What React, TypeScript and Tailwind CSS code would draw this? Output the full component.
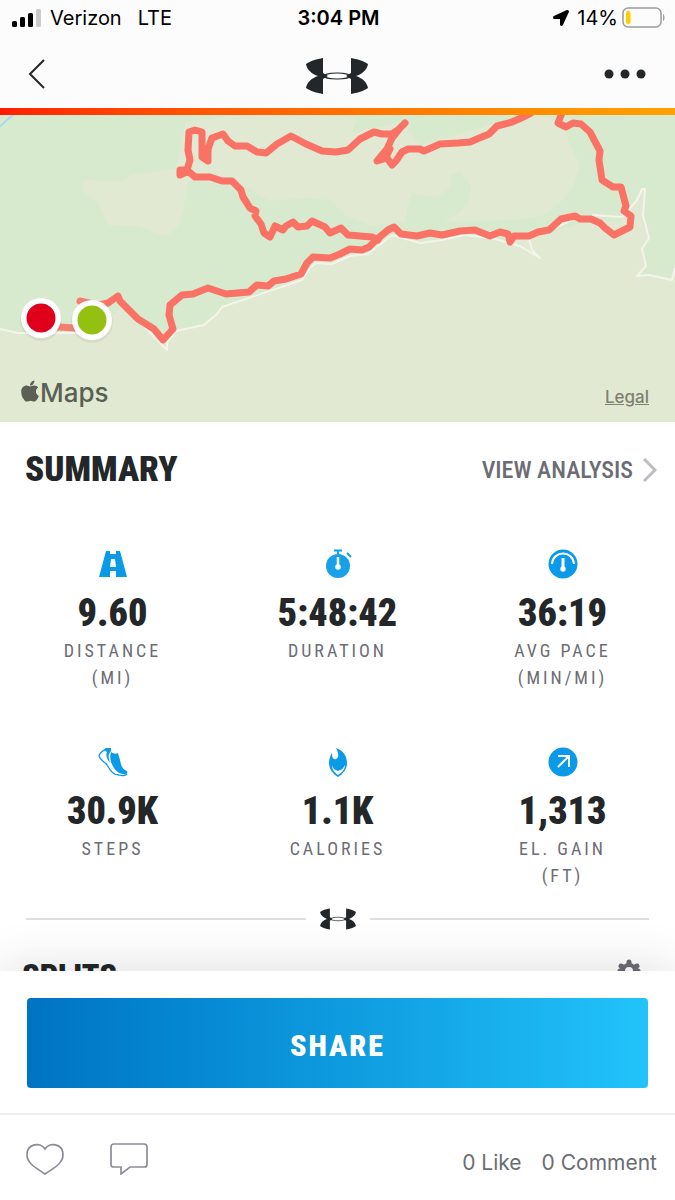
import type { ReactNode } from "react";
import { FaApple, FaLocationArrow } from "react-icons/fa";

const condensed = "font-['Roboto_Condensed','Liberation_Sans_Narrow','Open_Sans',sans-serif]";

const route =
  "M531 113 L519 119 L512 122 L497 126 L489 134 L470 142 L458 143 L440 144 L424 151 L420 149 L408 149 L402 152 L396 161 L392 165 L387 158 L377 161 L387 149 L392 138 L400 128 L405 123 L398 130 L392 134 L382 134 L374 132 L360 139 L348 150 L336 152 L322 151 L306 144 L291 136 L277 144 L266 153 L257 152 L247 146 L235 146 L228 141 L223 134 L212 138 L208 149 L208 161 L202 157 L202 132 L195 130 L189 132 L188 150 L190 160 L187 170 L180 170 L180 175 L188 171 L195 177 L210 177 L222 181 L232 181 L241 190 L243 197 L250 208 L256 211 L255 216 L261 224 L264 233 L270 237 L275 226 L283 230 L286 226 L293 222 L298 227 L307 226 L312 221 L325 227 L330 233 L341 228 L348 235 L372 237 L378 240";

const routeEast =
  "M562 113 L558 123 L566 127 L573 123 L581 124 L590 132 L600 151 L599 160 L602 180 L613 187 L621 187 L626 206 L624 211 L631 216 L630 227 L614 235 L605 228 L600 223 L591 219 L580 219 L575 216 L561 219 L549 230 L538 232 L529 236 L514 236 L510 242 L508 234 L500 232 L490 236 L475 230 L460 231 L442 235 L430 233 L417 236 L401 234 L394 227 L388 230 L376 240 L369 247 L362 250 L350 249 L340 254 L330 258 L313 257 L307 263 L301 274 L286 279 L274 281 L268 286 L257 285 L249 292 L226 294 L208 288 L193 294 L182 295 L170 305 L169 315 L173 329 L163 340 L154 329 L138 319 L120 301 L118 296 L108 303";

function RouteMap() {
  return (
    <svg
      className="block h-full w-full"
      viewBox="0 115 675 307"
      preserveAspectRatio="xMidYMid slice"
      role="img"
      aria-label="Workout route"
    >
      <rect y="115" width="675" height="307" fill="#e1e9d2" />
      <path
        d="M0 115 H675 V270 L672 280 L647 275 L638 277 L647 265 L643 250 L649 238 L643 215 L645 190 L641 188 L636 202 L620 222 L590 220 L560 230 L520 240 L460 238 L420 243 L393 235 L368 255 L350 256 L335 263 L315 265 L302 281 L222 308 L205 325 L175 331 L167 350 L120 308 L92 334 H18 L0 329 Z"
        fill="#d8eacd"
      />
      <path
        d="M186 122 L240 115 H330 L357 119 L352 133 L400 122 L420 145 L500 122 L540 115 L562 122 L570 145 L580 165 L574 185 L562 200 L545 215 L525 219 L485 221 L440 222 L400 222 L370 226 L345 215 L330 200 L308 198 L270 201 L245 186 L188 180 L184 207 L178 228 L166 236 L137 226 L108 225 L98 203 L82 190 L84 180 L122 182 L132 175 L176 169 Z"
        fill="#e1e9d2"
      />
      <path
        d="M405 223 L407 208 L412 193 L436 197 L450 188 L452 174 L460 171 L471 186 L470 200 L460 212 L440 224 Z"
        fill="#d8eacd"
      />
      <path d="M-2 128 L14 114" stroke="#a9d8ee" strokeWidth="2" />
      <path
        d="M0 329 L18 333 H84 M120 302 L167 350 V343 L176 331 L204 325 L217 314 L222 307 L302 280 L310 268 L316 263 L332 264 L350 256 L368 254 L392 235 L420 243 L442 240 L465 235 L495 239 L520 246 L540 258 L532 250 L529 238 M550 230 L572 220 M592 215 L622 217 L637 200 L642 189 H645 L643 215 L649 238 L642 249 L646 266 L637 276 L649 275 L672 280 L675 268"
        fill="none"
        stroke="#f4f4ec"
        strokeWidth="2"
        strokeLinejoin="round"
      />
      <g fill="none" stroke="#fa7265" strokeWidth="7" strokeLinejoin="round" strokeLinecap="round">
        <path d={route} />
        <path d={routeEast} />
        <path d="M108 303 L98 305 L80 301 M58 327 L76 328" opacity="0.9" />
        <path d="M386 157 L390 149" />
      </g>
      <circle cx="41" cy="320" r="21" fill="#000" opacity="0.05" />
      <circle cx="41" cy="318" r="20" fill="#fff" />
      <circle cx="41" cy="318" r="14.5" fill="#e0001c" />
      <circle cx="92" cy="322" r="21" fill="#000" opacity="0.05" />
      <circle cx="92" cy="320" r="20" fill="#fff" />
      <circle cx="92" cy="320" r="14.5" fill="#94c011" />
    </svg>
  );
}

function Logo({ className }: { className: string }) {
  return (
    <svg className={className} viewBox="0 0 64 38" fill="#23272a">
      <path d="M18 1 C12 2 5 4 1 7 C2 13 7 17 13 19 C7 21 2 25 1 31 C5 34 12 36 18 37 V22 L23 19 L18 16 Z" />
      <path d="M46 1 C52 2 59 4 63 7 C62 13 57 17 51 19 C57 21 62 25 63 31 C59 34 52 36 46 37 V22 L41 19 L46 16 Z" />
      <ellipse cx="32" cy="19" rx="13" ry="3" fill="none" stroke="#23272a" strokeWidth="1.2" />
    </svg>
  );
}

function RoadIcon() {
  return (
    <svg width="30" height="30" viewBox="0 0 30 30" fill="#0b9ae8">
      <path d="M8 2 H12 V5 H18 V2 H22 L29 28 H18 V22 H12 V28 H1 Z M13 10 L12 18 H18 L17 10 Z" fillRule="evenodd" />
    </svg>
  );
}

function StopwatchIcon() {
  return (
    <svg width="30" height="30" viewBox="0 0 30 30">
      <circle cx="15" cy="17" r="12" fill="#17a1e8" />
      <path d="M11 1.5 H19 M15 2 V6 M24 4 L28 8" stroke="#17a1e8" strokeWidth="2" fill="none" />
      <path d="M15 8 V18" stroke="#fff" strokeWidth="2.5" />
      <circle cx="15" cy="18" r="2.8" fill="#fff" />
    </svg>
  );
}

function PaceIcon() {
  return (
    <svg width="30" height="30" viewBox="0 0 30 30">
      <circle cx="15" cy="15" r="14.5" fill="#0b9ae8" />
      <path d="M4 15 C5 1 25 1 26 15" stroke="#fff" strokeWidth="2" fill="none" />
      <path d="M15 9 V20" stroke="#fff" strokeWidth="3" />
      <circle cx="15" cy="20" r="2.7" fill="#fff" />
    </svg>
  );
}

function ShoeIcon() {
  return (
    <svg width="30" height="30" viewBox="0 0 30 30">
      <path d="M6 3 L8 1 L13 1 L13 4 L11 7 C10 9 11 13 12 16 C10 14 7 8 9 5 Z" fill="#0b9ae8" />
      <path
        d="M13 5 C16 7 18 7 20 6 L22 13 C23 18 24 22 29 24 C30 27 28 28 25 27 C18 26 15 20 13 15 C12 11 12 8 13 5 Z"
        fill="#0b9ae8"
      />
      <path
        d="M8 2 C5 4 1 6 1 9 C2 13 6 14 9 18 C12 23 15 28 21 28 C24 29 28 29 29 27"
        fill="none"
        stroke="#0b9ae8"
        strokeWidth="1.3"
      />
    </svg>
  );
}

function FlameIcon() {
  return (
    <svg width="30" height="30" viewBox="0 0 30 30">
      <path
        d="M13 1 C20 3 24 9 24 16 C24 22 20 27 15 30 C10 27 6 22 6 16 C6 12 7 9 9 6 C9 10 10 13 13 12 C17 10 15 5 13 1 Z"
        fill="#0b9ae8"
      />
      <path d="M9 18 C10 22 12 23 15 24 C18 23 20 22 22 18 C22 23 18 26 15 28 C12 26 9 23 9 18 Z" fill="#fff" />
    </svg>
  );
}

function GainIcon() {
  return (
    <svg width="30" height="30" viewBox="0 0 30 30">
      <circle cx="15" cy="15" r="14.5" fill="#0b9ae8" />
      <path d="M10 9 H21 V20 M21 9 L10 20" stroke="#fff" strokeWidth="2" fill="none" />
    </svg>
  );
}

function GearIcon() {
  return (
    <svg width="24" height="24" viewBox="0 0 24 24" fill="none" stroke="#6c6d74">
      <circle cx="12" cy="12" r="6" strokeWidth="4" />
      <path
        d="M12 3 V5 M12 19 V21 M3 12 H5 M19 12 H21 M4 7 L6 8 M18 16 L20 17 M4 17 L6 16 M18 8 L20 7"
        strokeWidth="5"
        strokeLinecap="round"
      />
    </svg>
  );
}

type Stat = { icon: ReactNode; value: string; label: string; unit?: string };

const stats: Stat[] = [
  { icon: <RoadIcon />, value: "9.60", label: "DISTANCE", unit: "(MI)" },
  { icon: <StopwatchIcon />, value: "5:48:42", label: "DURATION" },
  { icon: <PaceIcon />, value: "36:19", label: "AVG PACE", unit: "(MIN/MI)" },
  { icon: <ShoeIcon />, value: "30.9K", label: "STEPS" },
  { icon: <FlameIcon />, value: "1.1K", label: "CALORIES" },
  { icon: <GainIcon />, value: "1,313", label: "EL. GAIN", unit: "(FT)" },
];

function StatusBar() {
  return (
    <div className="grid h-9 grid-cols-3 items-center pr-[10px] pl-3 text-xl text-black">
      <div className="flex items-center gap-2">
        <svg width="30" height="20" viewBox="0 0 30 20">
          <rect x="0" y="13" width="5" height="6" rx="1.5" />
          <rect x="8" y="9" width="5" height="10" rx="1.5" />
          <rect x="16" y="5" width="5" height="14" rx="1.5" />
          <rect x="24" y="1" width="5" height="18" rx="1.5" fill="#cbcbcb" />
        </svg>
        <span>Verizon</span>
        <span className="ml-2">LTE</span>
      </div>
      <div className="text-center text-xl font-semibold">3:04 PM</div>
      <div className="flex items-center justify-end gap-1">
        <FaLocationArrow size={16} className="mr-1" />
        <span>14%</span>
        <svg width="43" height="22" viewBox="0 0 43 22">
          <rect x="1" y="1" width="38" height="19" rx="5" fill="none" stroke="#9b9b9b" strokeWidth="1.5" />
          <rect x="4" y="4" width="4.5" height="13" rx="2" fill="#fc0" />
          <path d="M41 7 C43 8 43 13 41 14 Z" fill="#9b9b9b" />
        </svg>
      </div>
    </div>
  );
}

export default function App() {
  return (
    <div className="flex h-screen flex-col overflow-hidden bg-white font-['Inter','Liberation_Sans',sans-serif] text-[#23272a]">
      {/* Header */}
      <header className="shrink-0 bg-[#fcfcfc]">
        <StatusBar />
        <nav className="grid h-18 grid-cols-3 items-center px-7 pt-1">
          <button aria-label="Back" className="justify-self-start">
            <svg width="18" height="32" viewBox="0 0 18 32" fill="none" stroke="#23272a" strokeWidth="2">
              <path d="M16 2 L2 16 L16 30" />
            </svg>
          </button>
          <Logo className="mt-1 h-[38px] w-16 justify-self-center" />
          <button aria-label="More" className="justify-self-end">
            <svg width="43" height="10" viewBox="0 0 43 10" fill="#23272a">
              <circle cx="5" cy="5" r="4.5" />
              <circle cx="21" cy="5" r="4.5" />
              <circle cx="37" cy="5" r="4.5" />
            </svg>
          </button>
        </nav>
        <div className="h-[7px] bg-linear-to-r from-[#ff1a00] to-[#ffa200]" />
      </header>

      <main className="min-h-0 flex-1 overflow-hidden">
        {/* Map */}
        <section className="relative h-[307px]">
          <RouteMap />
          <div className="absolute bottom-[10px] left-[18px] flex items-center text-[26px] font-medium text-[#5b5f54]">
            <FaApple size={24} className="mb-1 -mr-0.5" />
            <span>Maps</span>
          </div>
          <a href="#legal" className="absolute right-[26px] bottom-3 text-[17px] font-medium text-[#7c8073] underline">
            Legal
          </a>
        </section>

        {/* Summary */}
        <section className={condensed}>
          <div className="flex h-24 items-center justify-between pr-[18px] pl-[25px]">
            <h2 className="text-[35px] font-black">SUMMARY</h2>
            <a href="#analysis" className="flex items-center gap-[10px] text-2xl font-medium text-[#6c6d74]">
              VIEW ANALYSIS
              <svg width="14" height="24" viewBox="0 0 14 24" fill="none" stroke="#bdbdc1" strokeWidth="3">
                <path d="M1 1 L12 12 L1 23" />
              </svg>
            </a>
          </div>
          <div className="grid grid-cols-3 gap-y-14 pt-[31px]">
            {stats.map((stat) => (
              <div key={stat.label} className="flex flex-col items-center">
                {stat.icon}
                <p className="mt-[14px] text-[38px] leading-10 font-black">{stat.value}</p>
                <p className="mt-1 text-lg leading-[27px] tracking-[3px] text-[#6c6d74]">{stat.label}</p>
                {stat.unit && <p className="text-lg leading-[27px] tracking-[3px] text-[#6c6d74]">{stat.unit}</p>}
              </div>
            ))}
          </div>
        </section>

        <div className="flex h-[60px] items-center gap-[13px] px-[26px]">
          <div className="h-0.5 flex-1 bg-[#dfdfe3]" />
          <Logo className="h-[22px] w-[38px]" />
          <div className="h-0.5 flex-1 bg-[#dfdfe3]" />
        </div>

        {/* Splits */}
        <section className={`flex items-start justify-between pt-[6px] pr-[34px] pl-[22px] ${condensed}`}>
          <h2 className="text-[32px] leading-10 font-black">SPLITS</h2>
          <button aria-label="Split settings" className="mt-1">
            <GearIcon />
          </button>
        </section>
      </main>

      {/* Share and social bar */}
      <footer className="relative shrink-0 bg-white shadow-[0_0_50px_rgba(0,0,0,0.14)]">
        <div className="px-[27px] pt-[27px] pb-[25px]">
          <button
            className={`h-[90px] w-full rounded bg-linear-to-r from-[#0073c2] to-[#22c3fb] pt-1 text-[30px] font-black tracking-[2px] text-white ${condensed}`}
          >
            SHARE
          </button>
        </div>
        <div className="flex h-[87px] items-center border-t-2 border-[#ededee] pt-[3px] pr-[18px] pl-[26px] text-[#6c6d74]">
          <button aria-label="Like">
            <svg width="38" height="32" viewBox="0 0 38 32" fill="none" stroke="#8b8c97" strokeWidth="1.7">
              <path d="M19 6 C15 -1 1 0 1 12 C1 21 12 26 19 31 C26 26 37 21 37 12 C37 0 23 -1 19 6 Z" />
            </svg>
          </button>
          <button aria-label="Comment" className="ml-[46px]">
            <svg width="38" height="32" viewBox="0 0 38 32" fill="none" stroke="#8b8c97" strokeWidth="1.7">
              <path d="M4 1 H34 Q37 1 37 4 V22 Q37 24 34 24 H20 L11 31 V24 H4 Q1 24 1 22 V4 Q1 1 4 1 Z" />
            </svg>
          </button>
          <div className="ml-auto flex gap-5 pt-2 text-[21px]">
            <span>0 Like</span>
            <span>0 Comment</span>
          </div>
        </div>
      </footer>
    </div>
  );
}
